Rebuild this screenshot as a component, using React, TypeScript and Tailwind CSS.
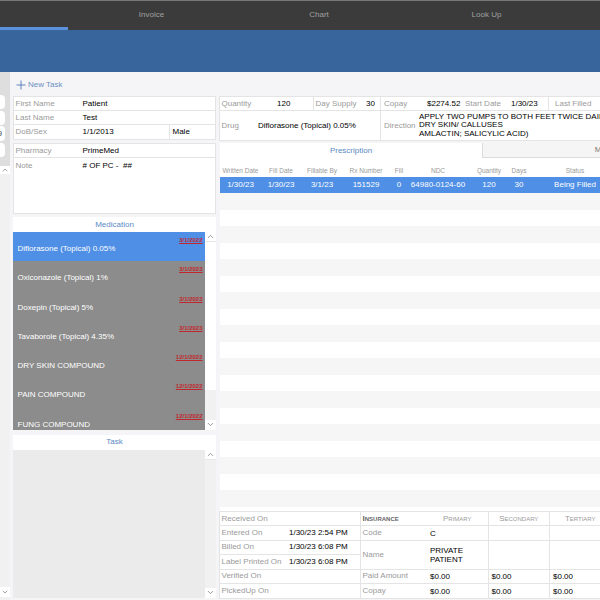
import { ChevronUp, ChevronDown, Plus } from "lucide-react";

const meds = [
  { name: "Diflorasone (Topical) 0.05%", date: "3/1/2022", active: true },
  { name: "Oxiconazole (Topical) 1%", date: "3/1/2023" },
  { name: "Doxepin (Topical) 5%", date: "3/1/2023" },
  { name: "Tavaborole (Topical) 4.35%", date: "3/1/2023" },
  { name: "DRY SKIN COMPOUND", date: "12/1/2022" },
  { name: "PAIN COMPOUND", date: "12/1/2022" },
  { name: "FUNG COMPOUND", date: "12/1/2022" },
];

const columns = [
  { label: "Written Date", value: "1/30/23", w: "w-[41px]" },
  { label: "Fill Date", value: "1/30/23", w: "w-[40px]" },
  { label: "Fillable By", value: "3/1/23", w: "w-[42px]" },
  { label: "Rx Number", value: "151529", w: "w-[46px]" },
  { label: "Fill", value: "0", w: "w-[20px]" },
  { label: "NDC", value: "64980-0124-60", w: "w-[58px]" },
  { label: "Quantity", value: "120", w: "w-[44px]" },
  { label: "Days", value: "30", w: "w-[16px]" },
  { label: "Status", value: "Being Filled", w: "w-[96px]" },
];

function Scroll({ thumb }: { thumb?: boolean }) {
  return (
    <div className="flex h-full w-[11px] shrink-0 flex-col bg-[#f1f1f1] text-[#777]">
      <div className="flex h-[10px] shrink-0 items-center justify-center border-b border-[#e8e8e8] bg-white">
        <ChevronUp size={9} />
      </div>
      {thumb && <div className="h-[148px] shrink-0 bg-white" />}
      <div className="mt-auto flex h-[10px] shrink-0 items-center justify-center bg-white">
        <ChevronDown size={9} />
      </div>
    </div>
  );
}

function Field({ label, value }: { label: string; value?: string }) {
  return (
    <div className="flex h-[14px] items-center border-b border-[#e4e4e4] pl-[1.5px]">
      <span className="w-[67px] shrink-0 text-[#9a9a9a]">{label}</span>
      <span className="text-black">{value}</span>
    </div>
  );
}

function InsuranceRow({ label, values, tall }: { label: string; values: string[]; tall?: boolean }) {
  return (
    <div className={`flex items-center border-b border-[#e4e4e4] last:border-b-0 ${tall ? "h-[29px]" : "h-[14.4px]"}`}>
      <span className="w-[66px] shrink-0 pl-[1.5px] text-[#9a9a9a]">{label}</span>
      {values.map((v, i) => (
        <span key={i} className="flex h-full w-[61.5px] shrink-0 items-center border-r border-[#e4e4e4] pl-[3px] leading-[9px] text-black">
          {v}
        </span>
      ))}
    </div>
  );
}

export default function App() {
  return (
    <div className="flex h-[600px] w-[600px] flex-col overflow-hidden bg-[#f5f5f7] font-['Liberation_Sans',Arial,sans-serif] text-[8px]">
      {/* Top nav */}
      <div className="flex h-[30px] shrink-0 border-t border-[#777] bg-[#3b3b3b] text-[#a0a0a0]">
        <div className="flex h-full w-[68px] items-end">
          <div className="h-[3px] w-full bg-[#5a90dc]" />
        </div>
        <div className="flex w-[167px] items-center justify-center pb-px">Invoice</div>
        <div className="flex w-[168px] items-center justify-center pb-px">Chart</div>
        <div className="flex w-[167px] items-center justify-center pb-px">Look Up</div>
      </div>
      <div className="h-[42px] shrink-0 bg-[#38659c]" />

      <div className="flex min-h-0 flex-1">
        {/* Collapsed left rail */}
        <div className="flex w-[10px] shrink-0 flex-col bg-[#f1f1f1]">
          <div className="flex h-[94px] shrink-0 flex-col bg-[#dedede] pt-[23px]">
            <div className="h-[14px] w-[5px] rounded-r-[4px] bg-white" />
            <div className="mt-[2px] h-[14px] w-[5px] rounded-r-[4px] bg-white" />
            <div className="mt-px flex h-[15px] w-[5px] items-center justify-start rounded-r-[4px] bg-white text-[7px] leading-none text-[#333]">
              <span className="-ml-[2px]">9</span>
            </div>
            <div className="mt-[2px] h-[14px] w-[5px] rounded-r-[4px] bg-white" />
          </div>
          <div className="flex h-[8px] shrink-0 items-center justify-center bg-white text-[#777]">
            <ChevronUp size={8} />
          </div>
          <div className="mt-auto mb-[3px] flex h-[10px] shrink-0 items-center justify-center bg-white text-[#777]">
            <ChevronDown size={8} />
          </div>
        </div>

        <div className="flex min-w-0 flex-1 flex-col">
          {/* Toolbar */}
          <div className="flex h-[24px] shrink-0 items-center pt-[2px] pl-[4px] text-[#6d8fbe]">
            <Plus size={14} strokeWidth={1.5} className="text-[#4a78b5]" />
            <span>New Task</span>
          </div>

          <div className="flex min-h-0 flex-1 pl-[3px]">
            {/* Left column */}
            <div className="flex w-[203px] shrink-0 flex-col">
              <div className="border border-[#e4e4e4] bg-white">
                <Field label="First Name" value="Patient" />
                <Field label="Last Name" value="Test" />
                <div className="flex h-[14px] items-center pl-[1.5px]">
                  <span className="w-[67px] shrink-0 text-[#9a9a9a]">DoB/Sex</span>
                  <span className="w-[86px] text-black">1/1/2013</span>
                  <span className="flex h-full items-center border-l border-[#e4e4e4] pl-[3px] text-black">Male</span>
                </div>
              </div>

              <div className="mt-[3px] h-[71px] border border-[#e4e4e4] bg-white">
                <Field label="Pharmacy" value="PrimeMed" />
                <div className="flex pt-[2px] pl-[1.5px]">
                  <span className="w-[67px] shrink-0 text-[#9a9a9a]">Note</span>
                  <span className="text-black"># OF PC -&nbsp; ##</span>
                </div>
              </div>

              <div className="mt-[3px] flex h-[15px] items-center justify-center bg-white text-[#5a8ac4]">Medication</div>
              <div className="flex h-[197.5px]">
                <div className="min-w-0 flex-1 overflow-hidden">
                  {meds.map((m) => (
                    <div
                      key={m.name}
                      className={`relative h-[29.3px] text-white ${m.active ? "bg-[#4f8fe6]" : "bg-[#8c8c8c]"}`}
                    >
                      <span className="absolute top-[4px] right-[2.5px] text-[6px] font-bold text-[#c0272d] underline">{m.date}</span>
                      <span className="absolute top-[11px] left-[4.5px] whitespace-nowrap">{m.name}</span>
                    </div>
                  ))}
                </div>
                <Scroll thumb />
              </div>

              <div className="mt-[5px] flex h-[15px] items-center justify-center bg-white text-[#5a8ac4]">Task</div>
              <div className="flex h-[148px]">
                <div className="flex-1 bg-[#ebebeb]" />
                <Scroll />
              </div>
            </div>

            {/* Right column */}
            <div className="ml-[3px] flex w-[520px] shrink-0 flex-col">
              <div className="flex h-[15px] items-center border border-[#e4e4e4] bg-white">
                <span className="w-[57px] shrink-0 pl-[1.5px] text-[#9a9a9a]">Quantity</span>
                <span className="w-[36px] shrink-0 text-black">120</span>
                <span className="flex h-full w-[53px] shrink-0 items-center border-l border-[#e4e4e4] pl-[1.5px] text-[#9a9a9a]">Day Supply</span>
                <span className="w-[14px] shrink-0 text-black">30</span>
                <span className="flex h-full w-[47px] shrink-0 items-center border-l border-[#e4e4e4] pl-[3px] text-[#9a9a9a]">Copay</span>
                <span className="w-[38px] shrink-0 text-black">$2274.52</span>
                <span className="w-[46px] shrink-0 text-[#9a9a9a]">Start Date</span>
                <span className="w-[37px] shrink-0 text-black">1/30/23</span>
                <span className="flex h-full items-center border-l border-[#e4e4e4] pl-[6px] whitespace-nowrap text-[#9a9a9a]">Last Filled</span>
              </div>
              <div className="flex h-[30px] items-center border-x border-b border-[#e4e4e4] bg-white">
                <span className="w-[38px] shrink-0 pl-[1.5px] text-[#9a9a9a]">Drug</span>
                <span className="w-[122px] shrink-0 text-black">Diflorasone (Topical) 0.05%</span>
                <span className="flex h-full w-[39px] shrink-0 items-center border-l border-[#e4e4e4] pl-[3px] text-[#9a9a9a]">Direction</span>
                <div className="leading-[8.5px] whitespace-nowrap text-black">
                  APPLY TWO PUMPS TO BOTH FEET TWICE DAILY
                  <br />
                  DRY SKIN/ CALLUSES
                  <br />
                  AMLACTIN; SALICYLIC ACID)
                </div>
              </div>

              <div className="mt-[2px] ml-px flex h-[15px] shrink-0">
                <div className="flex w-[262px] items-center justify-center bg-white text-[#5a8ac4]">Prescription</div>
                <div className="flex w-[252px] items-center justify-center border-b border-l border-[#dcdcdc] bg-[#f5f5f5] text-[#777]">Medical</div>
              </div>

              {/* Prescription table */}
              <div className="ml-px flex min-h-0 flex-1 flex-col bg-white">
                <div className="flex h-[19px] shrink-0 items-end pb-px text-[6.5px] text-[#9a9a9a]">
                  {columns.map((c) => (
                    <span key={c.label} className={`${c.w} flex shrink-0 justify-center whitespace-nowrap`}>{c.label}</span>
                  ))}
                </div>
                <div className="flex h-[16px] shrink-0 items-center bg-[#4f8fe6] text-white">
                  {columns.map((c) => (
                    <span key={c.label} className={`${c.w} flex shrink-0 justify-center whitespace-nowrap`}>{c.value}</span>
                  ))}
                </div>
                <div className="min-h-0 flex-1 overflow-hidden">
                  {Array.from({ length: 20 }, (_, i) => (
                    <div key={i} className={`h-[16.5px] ${i % 2 === 0 ? "bg-[#f6f6f6]" : "bg-white"}`} />
                  ))}
                </div>
              </div>

              {/* Dates and insurance */}
              <div className="flex h-[88px] shrink-0 border-y border-[#e4e4e4] bg-white">
                <div className="w-[142px] shrink-0 border-x border-[#e4e4e4]">
                  {[
                    ["Received On", ""],
                    ["Entered On", "1/30/23 2:54 PM"],
                    ["Billed On", "1/30/23 6:08 PM"],
                    ["Label Printed On", "1/30/23 6:08 PM"],
                    ["Verified On", ""],
                    ["PickedUp On", ""],
                  ].map(([label, value]) => (
                    <div key={label} className="flex h-[14.4px] items-center border-b border-[#e4e4e4] pl-[1.5px] last:border-b-0">
                      <span className="w-[67.5px] shrink-0 whitespace-nowrap text-[#9a9a9a]">{label}</span>
                      <span className="whitespace-nowrap text-black">{value}</span>
                    </div>
                  ))}
                </div>
                <div className="min-w-0 flex-1 overflow-hidden">
                  <div className="flex h-[14.4px] items-center border-b border-[#e4e4e4] text-[#9a9a9a] [font-variant:small-caps]">
                    <span className="w-[66px] shrink-0 pl-[1.5px] font-bold text-[#666]">Insurance</span>
                    <span className="flex h-full w-[61.5px] shrink-0 items-center justify-center border-r border-[#e4e4e4]">Primary</span>
                    <span className="flex h-full w-[61.5px] shrink-0 items-center justify-center border-r border-[#e4e4e4]">Secondary</span>
                    <span className="flex h-full w-[61.5px] shrink-0 items-center justify-center border-r border-[#e4e4e4]">Tertiary</span>
                  </div>
                  <InsuranceRow label="Code" values={["C", "", ""]} />
                  <InsuranceRow label="Name" values={["PRIVATE PATIENT", "", ""]} tall />
                  <InsuranceRow label="Paid Amount" values={["$0.00", "$0.00", "$0.00"]} />
                  <InsuranceRow label="Copay" values={["$0.00", "$0.00", "$0.00"]} />
                </div>
              </div>
              <div className="h-px shrink-0" />
            </div>
          </div>
        </div>
      </div>
    </div>
  );
}
